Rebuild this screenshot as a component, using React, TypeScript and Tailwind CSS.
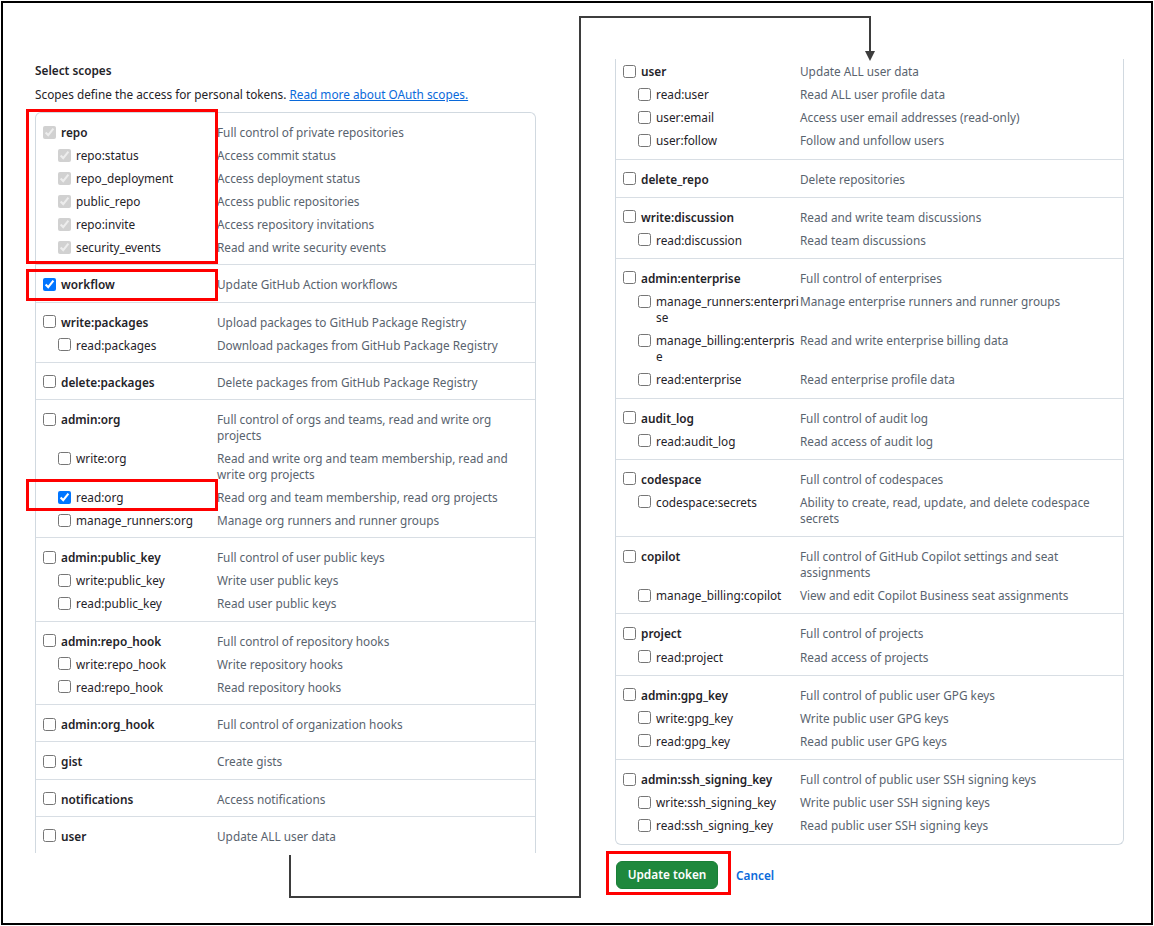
import React from 'react';

type Scope = {
  name: string;
  desc: string;
  checked?: boolean;
  disabled?: boolean;
  children?: Scope[];
};

const leftScopes: Scope[] = [
  {
    name: 'repo', desc: 'Full control of private repositories', checked: true, disabled: true,
    children: [
      { name: 'repo:status', desc: 'Access commit status', checked: true, disabled: true },
      { name: 'repo_deployment', desc: 'Access deployment status', checked: true, disabled: true },
      { name: 'public_repo', desc: 'Access public repositories', checked: true, disabled: true },
      { name: 'repo:invite', desc: 'Access repository invitations', checked: true, disabled: true },
      { name: 'security_events', desc: 'Read and write security events', checked: true, disabled: true },
    ],
  },
  { name: 'workflow', desc: 'Update GitHub Action workflows', checked: true },
  {
    name: 'write:packages', desc: 'Upload packages to GitHub Package Registry',
    children: [{ name: 'read:packages', desc: 'Download packages from GitHub Package Registry' }],
  },
  { name: 'delete:packages', desc: 'Delete packages from GitHub Package Registry' },
  {
    name: 'admin:org', desc: 'Full control of orgs and teams, read and write org projects',
    children: [
      { name: 'write:org', desc: 'Read and write org and team membership, read and write org projects' },
      { name: 'read:org', desc: 'Read org and team membership, read org projects', checked: true },
      { name: 'manage_runners:org', desc: 'Manage org runners and runner groups' },
    ],
  },
  {
    name: 'admin:public_key', desc: 'Full control of user public keys',
    children: [
      { name: 'write:public_key', desc: 'Write user public keys' },
      { name: 'read:public_key', desc: 'Read user public keys' },
    ],
  },
  {
    name: 'admin:repo_hook', desc: 'Full control of repository hooks',
    children: [
      { name: 'write:repo_hook', desc: 'Write repository hooks' },
      { name: 'read:repo_hook', desc: 'Read repository hooks' },
    ],
  },
  { name: 'admin:org_hook', desc: 'Full control of organization hooks' },
  { name: 'gist', desc: 'Create gists' },
  { name: 'notifications', desc: 'Access notifications' },
  { name: 'user', desc: 'Update ALL user data' },
];

const rightScopes: Scope[] = [
  {
    name: 'user', desc: 'Update ALL user data',
    children: [
      { name: 'read:user', desc: 'Read ALL user profile data' },
      { name: 'user:email', desc: 'Access user email addresses (read-only)' },
      { name: 'user:follow', desc: 'Follow and unfollow users' },
    ],
  },
  { name: 'delete_repo', desc: 'Delete repositories' },
  {
    name: 'write:discussion', desc: 'Read and write team discussions',
    children: [{ name: 'read:discussion', desc: 'Read team discussions' }],
  },
  {
    name: 'admin:enterprise', desc: 'Full control of enterprises',
    children: [
      { name: 'manage_runners:enterprise', desc: 'Manage enterprise runners and runner groups' },
      { name: 'manage_billing:enterprise', desc: 'Read and write enterprise billing data' },
      { name: 'read:enterprise', desc: 'Read enterprise profile data' },
    ],
  },
  {
    name: 'audit_log', desc: 'Full control of audit log',
    children: [{ name: 'read:audit_log', desc: 'Read access of audit log' }],
  },
  {
    name: 'codespace', desc: 'Full control of codespaces',
    children: [{ name: 'codespace:secrets', desc: 'Ability to create, read, update, and delete codespace secrets' }],
  },
  {
    name: 'copilot', desc: 'Full control of GitHub Copilot settings and seat assignments',
    children: [{ name: 'manage_billing:copilot', desc: 'View and edit Copilot Business seat assignments' }],
  },
  {
    name: 'project', desc: 'Full control of projects',
    children: [{ name: 'read:project', desc: 'Read access of projects' }],
  },
  {
    name: 'admin:gpg_key', desc: 'Full control of public user GPG keys',
    children: [
      { name: 'write:gpg_key', desc: 'Write public user GPG keys' },
      { name: 'read:gpg_key', desc: 'Read public user GPG keys' },
    ],
  },
  {
    name: 'admin:ssh_signing_key', desc: 'Full control of public user SSH signing keys',
    children: [
      { name: 'write:ssh_signing_key', desc: 'Write public user SSH signing keys' },
      { name: 'read:ssh_signing_key', desc: 'Read public user SSH signing keys' },
    ],
  },
];

type RowProps = { scope: Scope; child?: boolean; nameWidth: string; rowPad: string };

function ScopeRow({ scope, child, nameWidth, rowPad }: RowProps) {
  return (
    <div className={`flex items-start pt-[4px] leading-4 ${rowPad}`}>
      <div className={`${nameWidth} shrink-0 flex items-start gap-[5px] ${child ? 'pl-[15px]' : ''}`}>
        <input
          type="checkbox"
          defaultChecked={scope.checked}
          disabled={scope.disabled}
          className="mt-[1.5px] shrink-0 w-[13px] h-[13px]"
        />
        <span className={`break-all text-[#1f2328] ${child ? '' : 'font-semibold'}`}>{scope.name}</span>
      </div>
      <div className="flex-1 text-[#59636e]">{scope.desc}</div>
    </div>
  );
}

type SectionProps = {
  scope: Scope;
  nameWidth: string;
  rowPad: string;
  bottomPad: string;
  first?: boolean;
  cutTop?: boolean;
};

function ScopeSection({ scope, nameWidth, rowPad, bottomPad, first, cutTop }: SectionProps) {
  return (
    <div
      className={`px-[7px] ${bottomPad} ${cutTop ? 'pt-0' : 'pt-[7px]'} ${first ? '' : 'border-t border-[#d8dee4]'}`}
    >
      <ScopeRow scope={scope} nameWidth={nameWidth} rowPad={rowPad} />
      {scope.children?.map(c => (
        <ScopeRow key={c.name} scope={c} child nameWidth={nameWidth} rowPad={rowPad} />
      ))}
    </div>
  );
}

export default function App() {
  return (
    <div className="relative w-[1154px] h-[926px] bg-white p-px text-[11.8px] font-['Noto_Sans',sans-serif]">
      <div className="h-full border-2 border-black flex items-start">
        {/* left column, cut off at the bottom */}
        <div className="ml-[32px] w-[501px] h-[850px] overflow-hidden pt-[57px] flex flex-col">
          <h3 className="leading-5 font-semibold text-[#1f2328]">Select scopes</h3>
          <p className="mt-1 leading-5 text-[#1f2328]">
            Scopes define the access for personal tokens.{' '}
            <a href="#" className="text-[#0969da] underline">Read more about OAuth scopes.</a>
          </p>
          <div className="mt-2 flex-1 border-x border-t border-[#d1d9e0] rounded-t-md">
            {leftScopes.map((s, i) => (
              <ScopeSection
                key={s.name}
                scope={s}
                nameWidth="w-[174px]"
                rowPad="pb-[3px]"
                bottomPad="pb-[6.3px]"
                first={i === 0}
              />
            ))}
          </div>
        </div>

        {/* right column, cut off at the top */}
        <div className="ml-[79px] w-[509px] pt-[56px]">
          <div className="border-x border-b border-[#d1d9e0] rounded-b-md">
            {rightScopes.map((s, i) => (
              <ScopeSection
                key={s.name}
                scope={s}
                nameWidth="w-[177px]"
                rowPad="pb-[3.15px]"
                bottomPad="pb-[7px]"
                first={i === 0}
                cutTop={i === 0}
              />
            ))}
          </div>
          <div className="mt-[16px] flex items-center">
            <button className="ml-px w-[102px] h-[28px] rounded-md bg-[#1f883d] text-white font-semibold border border-[#1a7f37]">
              Update token
            </button>
            <a href="#" className="ml-[18px] mt-[2px] text-[#0969da] font-semibold">Cancel</a>
          </div>
        </div>
      </div>

      {/* annotations */}
      <svg className="absolute inset-0 pointer-events-none" width="1154" height="926">
        <polyline
          points="290,855 290,897 580,897 580,17 870,17 870,52"
          fill="none"
          stroke="#3d3d3d"
          strokeWidth="2"
        />
        <polygon points="865,51 875,51 870,61" fill="#3d3d3d" />
      </svg>
      <div className="absolute left-[26px] top-[109px] w-[192px] h-[155px] border-[3px] border-[#ff0000]" />
      <div className="absolute left-[26px] top-[269px] w-[192px] h-[32px] border-[3px] border-[#ff0000]" />
      <div className="absolute left-[26px] top-[479px] w-[192px] h-[32px] border-[3px] border-[#ff0000]" />
      <div className="absolute left-[606px] top-[851px] w-[125px] h-[44px] border-[3px] border-[#ff0000]" />
    </div>
  );
}
